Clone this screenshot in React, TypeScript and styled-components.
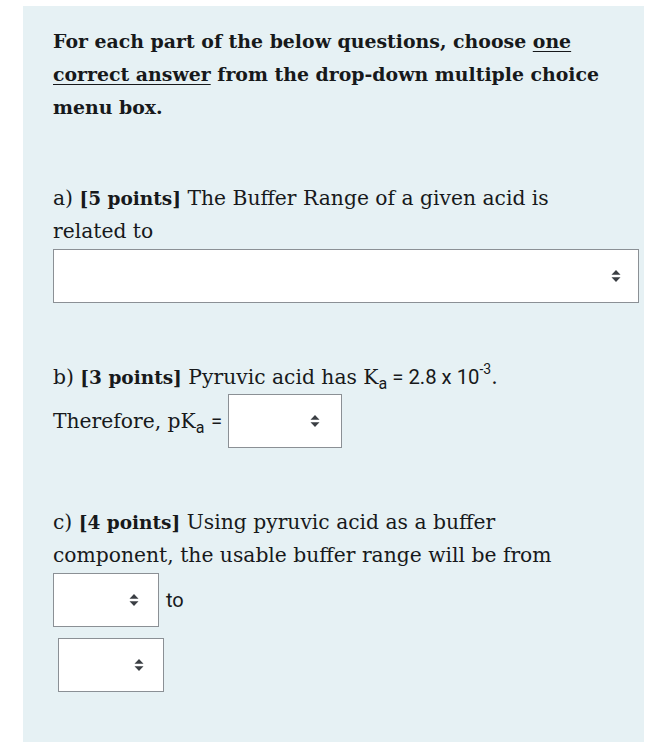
import React from "react";
import styled, { createGlobalStyle } from "styled-components";

const Global = createGlobalStyle`
  html, body { margin: 0; padding: 0; background: #ffffff; }
  * { box-sizing: border-box; }
`;

const Panel = styled.div`
  margin: 6px 7px 0 23px;
  width: 621px;
  min-height: 736px;
  background: #e6f1f4;
  padding: 19px 0 0 30px;
  color: #17191b;
  font-family: "DejaVu Serif", "Liberation Serif", serif;
  font-size: 20.3px;
  line-height: 33px;
  display: flex;
  flex-direction: column;
  gap: 58px;
`;

const Intro = styled.p`
  margin: 0;
  font-weight: bold;
  font-size: 18.9px;
  width: 560px;
`;

const Under = styled.span`
  text-decoration: underline;
  text-underline-offset: 3px;
`;

const Question = styled.div`
  display: flex;
  flex-direction: column;
`;

const Para = styled.p`
  margin: 0;
  width: 540px;
`;

const Points = styled.b`
  font-size: 18.5px;
`;

const Sans = styled.span`
  font-family: Roboto, "Liberation Sans", sans-serif;
`;

const Sub = styled.sub`
  font-family: Roboto, "Liberation Sans", sans-serif;
  font-size: 16px;
  vertical-align: -5px;
  line-height: 0;
`;

const Sup = styled.sup`
  font-family: Roboto, "Liberation Sans", sans-serif;
  font-size: 14px;
  vertical-align: 10px;
  line-height: 0;
`;

const SelectBox = styled.div<{ $w: number; $ml?: number; $right?: number }>`
  width: ${(p) => p.$w}px;
  height: 54px;
  margin-left: ${(p) => p.$ml ?? 0}px;
  background: #ffffff;
  border: 1px solid #8b9095;
  flex-shrink: 0;
  display: flex;
  align-items: center;
  justify-content: flex-end;
  padding-right: ${(p) => p.$right ?? 17}px;
`;

const Row = styled.div<{ $gap?: number; $mt?: number }>`
  display: flex;
  align-items: center;
  gap: ${(p) => p.$gap ?? 0}px;
  margin-top: ${(p) => p.$mt ?? 0}px;
`;

const ToText = styled.span`
  font-family: Roboto, "Liberation Sans", sans-serif;
  font-size: 20px;
`;

const Arrows = () => (
  <svg width="10" height="14" viewBox="0 0 10 14">
    <path d="M5 1 L9.5 5.8 H0.5 Z" fill="#3a3e43" />
    <path d="M5 13 L9.5 8.2 H0.5 Z" fill="#3a3e43" />
  </svg>
);

const Select = ({ w, ml, right }: { w: number; ml?: number; right?: number }) => (
  <SelectBox $w={w} $ml={ml} $right={right}>
    <Arrows />
  </SelectBox>
);

export default function App() {
  return (
    <>
      <Global />
      <Panel>
        <Intro>
          For each part of the below questions, choose <Under>one</Under>{" "}
          <Under>correct answer</Under> from the drop-down multiple choice menu box.
        </Intro>

        <Question>
          <Para>
            a) <Points>[5 points]</Points> The Buffer Range of a given acid is related to
          </Para>
          <Row $mt={1}>
            <Select w={586} right={17} />
          </Row>
        </Question>

        <Question>
          <Para>
            b) <Points>[3 points]</Points> Pyruvic acid has K<Sub>a</Sub>
            <Sans> = 2.8 x 10</Sans>
            <Sup>-3</Sup>.
          </Para>
          <Row $gap={6}>
            <span>
              Therefore, pK<Sub>a</Sub> <Sans>=</Sans>
            </span>
            <Select w={114} right={21} />
          </Row>
        </Question>

        <Question>
          <Para>
            c) <Points>[4 points]</Points> Using pyruvic acid as a buffer component, the
            usable buffer range will be from
          </Para>
          <Row $gap={7} $mt={1}>
            <Select w={106} right={19} />
            <ToText>to</ToText>
          </Row>
          <Row $mt={11}>
            <Select w={106} ml={5} right={19} />
          </Row>
        </Question>
      </Panel>
    </>
  );
}
